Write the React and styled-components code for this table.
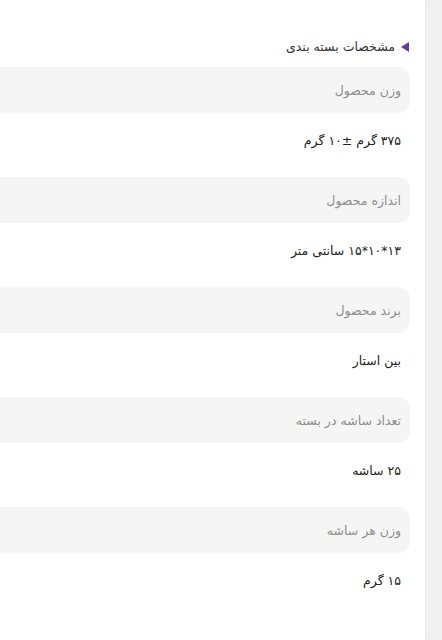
import React from "react";
import styled, { createGlobalStyle } from "styled-components";

const specs = [
    { label: "وزن محصول", value: "۳۷۵ گرم ±۱۰ گرم" },
    { label: "اندازه محصول", value: "۱۳*۱۰*۱۵ سانتی متر" },
    { label: "برند محصول", value: "بین استار" },
    { label: "تعداد ساشه در بسته", value: "۲۵ ساشه" },
    { label: "وزن هر ساشه", value: "۱۵ گرم" },
];

export default function App() {
    return (
        <>
            <GlobalStyle />
            <Page>
                <Main>
                    <Section>
                        <Title>
                            <Arrow />
                            <span>مشخصات بسته بندی</span>
                        </Title>
                        {specs.map((spec) => (
                            <React.Fragment key={spec.label}>
                                <Label>{spec.label}</Label>
                                <Value>{spec.value}</Value>
                            </React.Fragment>
                        ))}
                    </Section>
                </Main>
                <Sidebar />
            </Page>
        </>
    );
}

const GlobalStyle = createGlobalStyle`
    html, body {
        margin: 0;
        padding: 0;
        background: #ffffff;
        overflow: hidden;
    }
    body {
        font-family: "DejaVu Sans", "Noto Sans", sans-serif;
    }
`;

const Page = styled.div`
    display: flex;
    height: 640px;
    width: 442px;
`;

const Main = styled.div`
    flex: 1;
    overflow: hidden;
    padding-right: 15px;
`;

const Section = styled.div`
    direction: rtl;
    display: flex;
    flex-direction: column;
    margin-left: -40px;
    padding-top: 37px;
`;

const Title = styled.div`
    align-items: center;
    color: #333333;
    display: flex;
    font-size: 12.5px;
    gap: 6px;
    height: 20px;
    line-height: 20px;
    margin-bottom: 10px;
    padding-right: 1px;
`;

const Arrow = styled.span`
    border-bottom: 5px solid transparent;
    border-right: 8px solid #5e3d96;
    border-top: 5px solid transparent;
    display: block;
    height: 0;
    width: 0;
`;

const Label = styled.div`
    align-items: center;
    background: #f5f5f5;
    border-radius: 12px;
    box-sizing: border-box;
    color: #8e8e8e;
    display: flex;
    font-size: 12.5px;
    height: 46px;
    padding-right: 9px;
`;

const Value = styled.div`
    box-sizing: border-box;
    color: #222222;
    font-size: 12.5px;
    height: 64px;
    line-height: 20px;
    padding: 18px 9px 26px 0;
`;

const Sidebar = styled.div`
    background: #f1f1f1;
    box-shadow: inset 1px 0 2px rgba(0, 0, 0, 0.04);
    flex-shrink: 0;
    width: 17px;
`;
